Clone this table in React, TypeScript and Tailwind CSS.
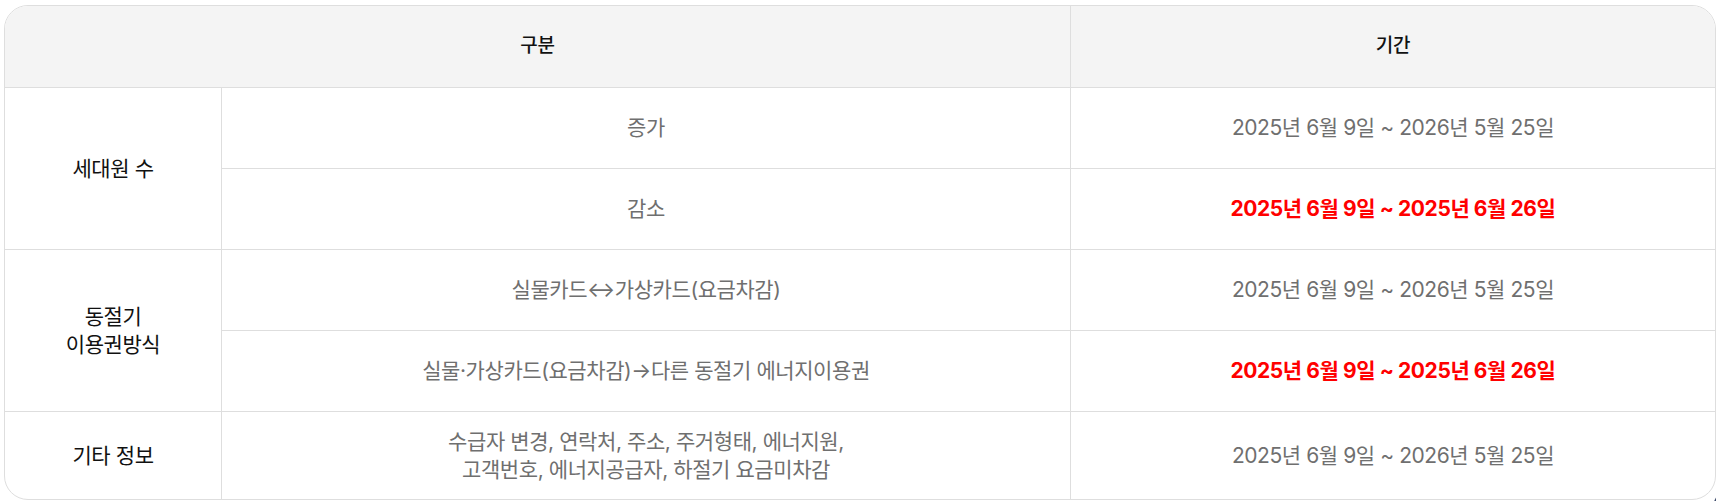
import React from "react";

const font = { fontFamily: 'Inter, "Noto Sans CJK KR", sans-serif' };

function Cell({
  children,
  className = "",
}: {
  children: React.ReactNode;
  className?: string;
}) {
  return (
    <div className={`flex items-center justify-center text-center ${className}`}>
      {children}
    </div>
  );
}

const gray = "2025년 6월 9일 ~ 2026년 5월 25일";
const red = "2025년 6월 9일 ~ 2025년 6월 26일";

export default function App() {
  return (
    <div className="relative w-[1716px] h-[501px] overflow-hidden bg-white" style={font}>
      <div className="pl-[4px] pt-[5px]">
        <div className="w-[1712px] rounded-[24px] border border-[#dedede] overflow-hidden grid grid-cols-[216px_849px_1fr] grid-rows-[82px_81px_81px_81px_81px_87px] text-[21px] tracking-[-0.02em]">
          <Cell className="col-span-2 bg-[#f4f4f4] border-b border-[#dedede] text-[#111] font-medium text-[19px] tracking-[-0.01em]">구분</Cell>
          <Cell className="bg-[#f4f4f4] border-b border-l border-[#dedede] text-[#111] font-medium text-[19px] tracking-[-0.01em]">기간</Cell>

          <Cell className="row-span-2 border-b border-[#dedede] text-[#111]">세대원 수</Cell>
          <Cell className="border-b border-l border-[#dedede] text-[#6f6f6f]">증가</Cell>
          <Cell className="border-b border-l border-[#dedede] text-[#6f6f6f]">{gray}</Cell>
          <Cell className="border-b border-l border-[#dedede] text-[#6f6f6f]">감소</Cell>
          <Cell className="border-b border-l border-[#dedede] text-[#ff0000] font-bold">{red}</Cell>

          <Cell className="row-span-2 border-b border-[#dedede] text-[#111] leading-[28px]">
            동절기
            <br />
            이용권방식
          </Cell>
          <Cell className="border-b border-l border-[#dedede] text-[#6f6f6f]">실물카드↔가상카드(요금차감)</Cell>
          <Cell className="border-b border-l border-[#dedede] text-[#6f6f6f]">{gray}</Cell>
          <Cell className="border-b border-l border-[#dedede] text-[#6f6f6f]">실물·가상카드(요금차감)→다른 동절기 에너지이용권</Cell>
          <Cell className="border-b border-l border-[#dedede] text-[#ff0000] font-bold">{red}</Cell>

          <Cell className="text-[#111]">기타 정보</Cell>
          <Cell className="border-l border-[#dedede] text-[#6f6f6f] leading-[28px]">
            수급자 변경, 연락처, 주소, 주거형태, 에너지원,
            <br />
            고객번호, 에너지공급자, 하절기 요금미차감
          </Cell>
          <Cell className="border-l border-[#dedede] text-[#6f6f6f]">{gray}</Cell>
        </div>
      </div>
      <div className="absolute left-[1712px] top-[484px] w-[56px] h-[56px] rounded-full bg-[#3e4c6c]" />
    </div>
  );
}
